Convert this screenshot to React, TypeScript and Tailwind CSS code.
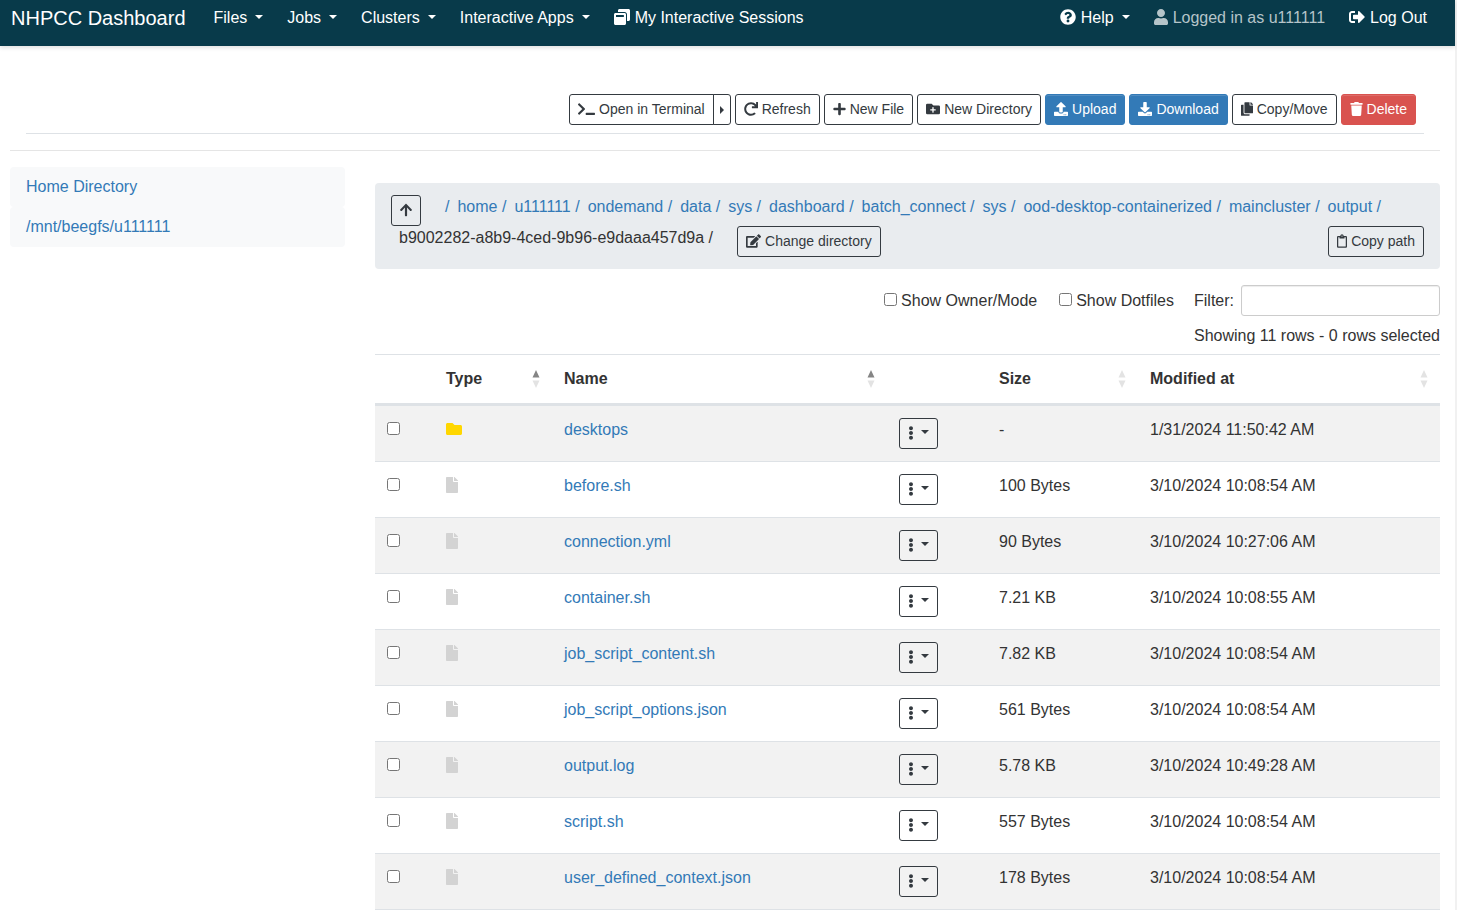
import type { ReactNode } from "react";
import {
  FaArrowUp,
  FaCopy,
  FaDownload,
  FaEdit,
  FaEllipsisV,
  FaFile,
  FaFolder,
  FaFolderPlus,
  FaPlus,
  FaQuestionCircle,
  FaRedo,
  FaRegClipboard,
  FaSignOutAlt,
  FaTerminal,
  FaTrash,
  FaUpload,
  FaUser,
  FaWindowRestore,
} from "react-icons/fa";

const crumbs = [
  "home",
  "u111111",
  "ondemand",
  "data",
  "sys",
  "dashboard",
  "batch_connect",
  "sys",
  "ood-desktop-containerized",
  "maincluster",
  "output",
];

const files = [
  { name: "desktops", folder: true, size: "-", modified: "1/31/2024 11:50:42 AM" },
  { name: "before.sh", folder: false, size: "100 Bytes", modified: "3/10/2024 10:08:54 AM" },
  { name: "connection.yml", folder: false, size: "90 Bytes", modified: "3/10/2024 10:27:06 AM" },
  { name: "container.sh", folder: false, size: "7.21 KB", modified: "3/10/2024 10:08:55 AM" },
  { name: "job_script_content.sh", folder: false, size: "7.82 KB", modified: "3/10/2024 10:08:54 AM" },
  { name: "job_script_options.json", folder: false, size: "561 Bytes", modified: "3/10/2024 10:08:54 AM" },
  { name: "output.log", folder: false, size: "5.78 KB", modified: "3/10/2024 10:49:28 AM" },
  { name: "script.sh", folder: false, size: "557 Bytes", modified: "3/10/2024 10:08:54 AM" },
  { name: "user_defined_context.json", folder: false, size: "178 Bytes", modified: "3/10/2024 10:08:54 AM" },
];

function Caret() {
  return (
    <svg className="mb-0.5 h-1 w-2 shrink-0" viewBox="0 0 8 4" fill="currentColor" aria-hidden="true">
      <path d="M0 0h8L4 4z" />
    </svg>
  );
}

function NavMenu({ children }: { children: ReactNode }) {
  return (
    <button type="button" className="flex items-center gap-2 whitespace-nowrap">
      <span className="flex items-center gap-[5px] [&>svg]:mb-0.5">{children}</span>
      <Caret />
    </button>
  );
}

const tones = {
  outline: "border-[#343a40] text-[#343a40]",
  primary: "border-[#337ab7] bg-[#337ab7] text-white shadow-[inset_0_1px_0_rgba(255,255,255,0.15)]",
  danger: "border-[#d9534f] bg-[#d9534f] text-white shadow-[inset_0_1px_0_rgba(255,255,255,0.15)]",
};

function Button({ tone = "outline", children }: { tone?: keyof typeof tones; children: ReactNode }) {
  return (
    <button
      type="button"
      className={`flex h-[31px] items-center gap-1 rounded-[3px] border px-2 pb-0.5 text-sm whitespace-nowrap ${tones[tone]}`}
    >
      {children}
    </button>
  );
}

function SortHeader({ label, ascending = false }: { label: string; ascending?: boolean }) {
  return (
    <th scope="col" className="px-3 py-3 text-left font-bold">
      <button type="button" className="flex w-full items-center justify-between font-bold">
        {label}
        <svg className="h-[18px] w-2" viewBox="0 0 8 18" aria-hidden="true">
          <path d="M4 0l3.5 7.5h-7z" fill={ascending ? "#858585" : "#e3e3e3"} />
          <path d="M4 18L.5 10.500h7z" fill="#e3e3e3" />
        </svg>
      </button>
    </th>
  );
}

export default function App() {
  return (
    <div className="min-h-screen border-r-2 border-[#f1f1f1] bg-white font-['Liberation_Sans',Arial,sans-serif] text-base text-[#333]">
      <header className="flex h-[46px] items-start justify-between bg-[#083a4a] pr-7 pl-[11px] text-white shadow-[0_2px_4px_rgba(0,0,0,0.12)]">
        <nav className="flex h-9 items-center gap-6" aria-label="Main">
          <a href="#" className="mr-1 text-xl whitespace-nowrap">
            NHPCC Dashboard
          </a>
          <NavMenu>Files</NavMenu>
          <NavMenu>Jobs</NavMenu>
          <NavMenu>Clusters</NavMenu>
          <NavMenu>Interactive Apps</NavMenu>
          <a href="#" className="flex items-center gap-[5px] whitespace-nowrap [&>svg]:mb-0.5">
            <FaWindowRestore />
            My Interactive Sessions
          </a>
        </nav>
        <nav className="flex h-9 items-center gap-6" aria-label="Account">
          <NavMenu>
            <FaQuestionCircle />
            Help
          </NavMenu>
          <span className="flex items-center gap-[5px] whitespace-nowrap text-[#b5c4c9] [&>svg]:mb-0.5">
            <FaUser className="h-4 w-[14px]" />
            Logged in as u111111
          </span>
          <a href="#" className="flex items-center gap-[5px] whitespace-nowrap [&>svg]:mb-0.5">
            <FaSignOutAlt />
            Log Out
          </a>
        </nav>
      </header>

      <main className="pr-[15px] pl-[10px]">
        <div className="mx-4 flex justify-end gap-1 border-b border-[#dee2e6] pt-12 pr-2 pb-2">
          <div className="flex">
            <button
              type="button"
              className="flex h-[31px] items-center gap-1 rounded-l-[3px] border border-[#343a40] px-2 pb-0.5 text-sm whitespace-nowrap text-[#343a40]"
            >
              <FaTerminal className="h-[14px] w-[17px]" />
              Open in Terminal
            </button>
            <button
              type="button"
              aria-label="Open in terminal options"
              className="-ml-px flex h-[31px] w-[18px] items-center justify-center rounded-r-[3px] border border-[#343a40] text-[#343a40]"
            >
              <svg className="h-2 w-1" viewBox="0 0 4 8" fill="currentColor" aria-hidden="true">
                <path d="M0 0v8l4-4z" />
              </svg>
            </button>
          </div>
          <Button>
            <FaRedo />
            Refresh
          </Button>
          <Button>
            <FaPlus className="h-[14px] w-[13px]" />
            New File
          </Button>
          <Button>
            <FaFolderPlus />
            New Directory
          </Button>
          <Button tone="primary">
            <FaUpload />
            Upload
          </Button>
          <Button tone="primary">
            <FaDownload />
            Download
          </Button>
          <Button>
            <FaCopy className="h-[14px] w-3" />
            Copy/Move
          </Button>
          <Button tone="danger">
            <FaTrash className="h-[14px] w-[13px]" />
            Delete
          </Button>
        </div>
        <hr className="mt-4 mb-4 border-[#e5e5e5]" />

        <div className="-mx-[15px] flex items-start">
          <aside className="w-1/4 px-[15px]">
            <nav className="flex flex-col text-[#337ab7]" aria-label="Favorites">
              <a href="#" className="rounded bg-[#f8f9fa] px-4 py-2">
                Home Directory
              </a>
              <a href="#" className="rounded bg-[#f8f9fa] px-4 py-2">
                /mnt/beegfs/u111111
              </a>
            </nav>
          </aside>

          <section className="w-3/4 px-[15px] pt-4">
            <ol className="flex flex-wrap rounded bg-[#e9ecef] px-4 py-3">
              <li className="mr-6">
                <button
                  type="button"
                  aria-label="Parent directory"
                  className="flex h-[31px] w-[30px] items-center justify-center rounded-[3px] border border-[#343a40] pb-0.5 text-sm text-[#343a40]"
                >
                  <FaArrowUp />
                </button>
              </li>
              <li className="text-[#337ab7]">
                <a href="#">/</a>
              </li>
              {crumbs.map((crumb, index) => (
                <li key={index} className="pl-2 text-[#337ab7]">
                  <a href="#">{crumb} /</a>
                </li>
              ))}
              <li className="pl-2">b9002282-a8b9-4ced-9b96-e9daaa457d9a /</li>
              <li className="ml-6">
                <Button>
                  <FaEdit className="h-[14px] w-[15px]" />
                  Change directory
                </Button>
              </li>
              <li className="ml-auto">
                <Button>
                  <FaRegClipboard className="h-[14px] w-[10px]" />
                  Copy path
                </Button>
              </li>
            </ol>

            <div className="mt-4 flex items-center justify-end">
              <label className="flex items-center gap-1">
                <input type="checkbox" className="mb-0.5 size-[13px]" />
                Show Owner/Mode
              </label>
              <label className="ml-[22px] flex items-center gap-1">
                <input type="checkbox" className="mb-0.5 size-[13px]" />
                Show Dotfiles
              </label>
              <label className="ml-5 flex items-center gap-[7px]">
                Filter:
                <input
                  type="search"
                  className="h-[31px] w-[199px] rounded-[3px] border border-[#ccc] px-2 text-sm shadow-[inset_0_1px_1px_rgba(0,0,0,0.075)]"
                />
              </label>
            </div>
            <p className="mt-2 mb-[6px] text-right">Showing 11 rows - 0 rows selected</p>

            <table className="w-full table-fixed border-separate border-spacing-0">
              <colgroup>
                <col className="w-[59px]" />
                <col className="w-[118px]" />
                <col />
                <col className="w-[100px]" />
                <col className="w-[151px]" />
                <col className="w-[302px]" />
              </colgroup>
              <thead className="[&_th]:border-t [&_th]:border-b-3 [&_th]:border-[#dee2e6]">
                <tr>
                  <th scope="col" aria-label="Select" />
                  <SortHeader label="Type" ascending />
                  <SortHeader label="Name" ascending />
                  <th scope="col" aria-label="Actions" />
                  <SortHeader label="Size" />
                  <SortHeader label="Modified at" />
                </tr>
              </thead>
              <tbody className="[&_td]:border-b [&_td]:border-[#dee2e6] [&_td]:px-3 [&_td]:py-3 [&_td]:align-top">
                {files.map((file) => (
                  <tr key={file.name} className="odd:bg-[#f2f2f2]">
                    <td>
                      <input type="checkbox" aria-label={`Select ${file.name}`} className="mt-1 block size-[13px]" />
                    </td>
                    <td>
                      <span className="flex h-6 items-center pb-0.5">
                        {file.folder ? (
                          <FaFolder className="size-4 text-[#ffd700]" />
                        ) : (
                          <FaFile className="h-4 w-3 text-[#d3d3d3]" />
                        )}
                      </span>
                    </td>
                    <td>
                      <a href="#" className="text-[#337ab7]">
                        {file.name}
                      </a>
                    </td>
                    <td>
                      <button
                        type="button"
                        aria-label={`Actions for ${file.name}`}
                        className="flex h-[31px] w-[39px] items-center gap-[7px] rounded-[3px] border border-[#343a40] px-2 pb-0.5 text-sm text-[#343a40]"
                      >
                        <FaEllipsisV className="h-[14px] w-[6px]" />
                        <Caret />
                      </button>
                    </td>
                    <td>{file.size}</td>
                    <td>{file.modified}</td>
                  </tr>
                ))}
              </tbody>
            </table>
          </section>
        </div>
      </main>
    </div>
  );
}
